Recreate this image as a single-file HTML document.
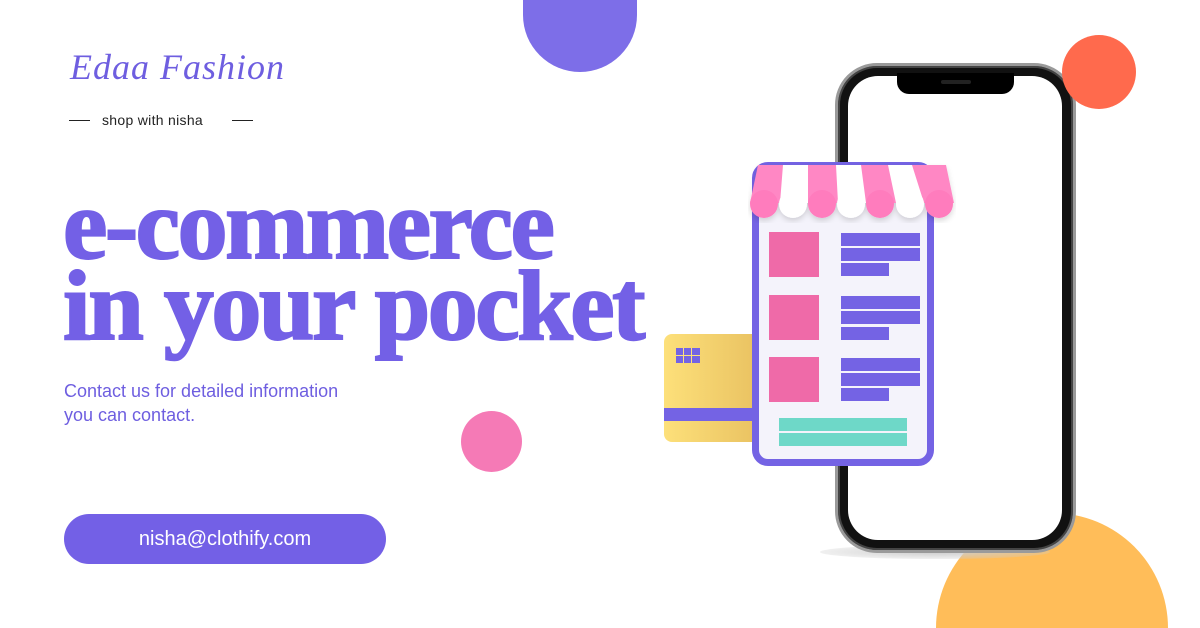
<!DOCTYPE html>
<html style="width:1200px;height:628px;overflow:hidden"><head><meta charset="utf-8"><style>
*{margin:0;padding:0;box-sizing:border-box}
body{width:1200px;height:628px;background:#fff;position:relative;overflow:hidden;font-family:"Liberation Sans",sans-serif}
.a{position:absolute}
.c{position:absolute;border-radius:50%}
.bar{position:absolute;background:#7463e4;height:13px}
.sq{position:absolute;background:#ef6aa8;width:50px;height:45px}
</style></head><body>
<div class="a" style="left:523px;top:0;width:114px;height:72px;border-radius:0 0 57px 57px/0 0 57px 57px;background:#7d6ee8;overflow:hidden"></div>
<div class="c" style="left:461px;top:411px;width:61px;height:61px;background:#f57ab6"></div>
<div class="a" style="left:936px;top:513px;width:232px;height:115px;border-radius:116px 116px 0 0;background:#ffbd59"></div>

<div class="a" style="left:70px;top:46px;font-family:'Liberation Serif',serif;font-style:italic;font-size:36px;color:#6e5ee0;letter-spacing:1px">Edaa Fashion</div>
<div class="a" style="left:69px;top:120px;width:21px;height:1px;background:#222"></div>
<div class="a" style="left:102px;top:112px;font-size:14px;color:#222;letter-spacing:0.3px">shop with nisha</div>
<div class="a" style="left:232px;top:120px;width:21px;height:1px;background:#222"></div>

<div class="a" style="left:63px;top:184px;font-family:'Liberation Serif',serif;font-weight:bold;font-size:100px;line-height:81px;color:#7360e6;-webkit-text-stroke:2px #7360e6;letter-spacing:-2.5px;white-space:nowrap">e-commerce<br>in your pocket</div>
<div class="a" style="left:64px;top:379px;font-size:18px;line-height:24px;color:#6e5ee0">Contact us for detailed information<br>you can contact.</div>
<div class="a" style="left:64px;top:514px;width:322px;height:50px;border-radius:25px;background:#7360e6;color:#fff;font-size:20px;line-height:50px;text-align:center">nisha@clothify.com</div>

<!-- phone -->
<div class="a" style="left:820px;top:545px;width:230px;height:14px;border-radius:50%;background:radial-gradient(#ccc,rgba(255,255,255,0))"></div>
<div class="a" style="left:835px;top:63px;width:241px;height:490px;border-radius:42px;background:#111;border:3px solid #9a9a9a;box-shadow:inset 0 0 0 2px #444"></div>
<div class="a" style="left:848px;top:76px;width:214px;height:464px;border-radius:30px;background:#fff"></div>
<div class="a" style="left:897px;top:73px;width:117px;height:21px;border-radius:0 0 12px 12px;background:#000"></div>
<div class="a" style="left:941px;top:80px;width:30px;height:4px;border-radius:2px;background:#222"></div>
<div class="c" style="left:1062px;top:35px;width:74px;height:74px;background:#ff6a4d"></div>

<!-- card -->
<div class="a" style="left:664px;top:334px;width:100px;height:108px;border-radius:8px;background:linear-gradient(90deg,#fde07a,#e8c060)"></div>
<div class="a" style="left:664px;top:408px;width:100px;height:13px;background:#7463e4"></div>
<div class="a" style="left:676px;top:348px;width:24px;height:15px;background:#7463e4;background-image:linear-gradient(90deg,transparent 7px,#fde07a 7px,#fde07a 8px,transparent 8px,transparent 15px,#fde07a 15px,#fde07a 16px,transparent 16px),linear-gradient(transparent 7px,#fde07a 7px,#fde07a 8px,transparent 8px)"></div>

<!-- shop -->
<div class="a" style="left:752px;top:162px;width:182px;height:304px;border-radius:16px;background:#f4f3fb;border:7px solid #7463e4"></div>
<svg class="a" style="left:748px;top:163px" width="208" height="60" viewBox="0 0 208 60">
<defs><filter id="s"><feDropShadow dx="0" dy="3" stdDeviation="3" flood-color="#000" flood-opacity="0.15"/></filter></defs>
<g filter="url(#s)">
<path d="M10 2 H198 L206 40 H2 Z" fill="#ff87c4"/>
<path d="M35 2 L32 40 H60 L60 2Z M88 2 L90 40 H118 L113 2Z M140 2 L148 40 H176 L164 2Z" fill="#fff"/>
<g fill="#ff7bbd"><circle cx="16" cy="41" r="14"/><circle cx="74" cy="41" r="14"/><circle cx="132" cy="41" r="14"/><circle cx="191" cy="41" r="14"/></g>
<g fill="#fff"><circle cx="45" cy="41" r="14"/><circle cx="103" cy="41" r="14"/><circle cx="162" cy="41" r="14"/></g>
</g>
</svg>
<div class="sq" style="left:769px;top:232px"></div>
<div class="sq" style="left:769px;top:295px"></div>
<div class="sq" style="left:769px;top:357px"></div>
<div class="bar" style="left:841px;top:233px;width:79px"></div>
<div class="bar" style="left:841px;top:248px;width:79px"></div>
<div class="bar" style="left:841px;top:263px;width:48px"></div>
<div class="bar" style="left:841px;top:296px;width:79px"></div>
<div class="bar" style="left:841px;top:311px;width:79px"></div>
<div class="bar" style="left:841px;top:327px;width:48px"></div>
<div class="bar" style="left:841px;top:358px;width:79px"></div>
<div class="bar" style="left:841px;top:373px;width:79px"></div>
<div class="bar" style="left:841px;top:388px;width:48px"></div>
<div class="a" style="left:779px;top:418px;width:128px;height:13px;background:#6ed8c8"></div>
<div class="a" style="left:779px;top:433px;width:128px;height:13px;background:#6ed8c8"></div>
</body></html>
